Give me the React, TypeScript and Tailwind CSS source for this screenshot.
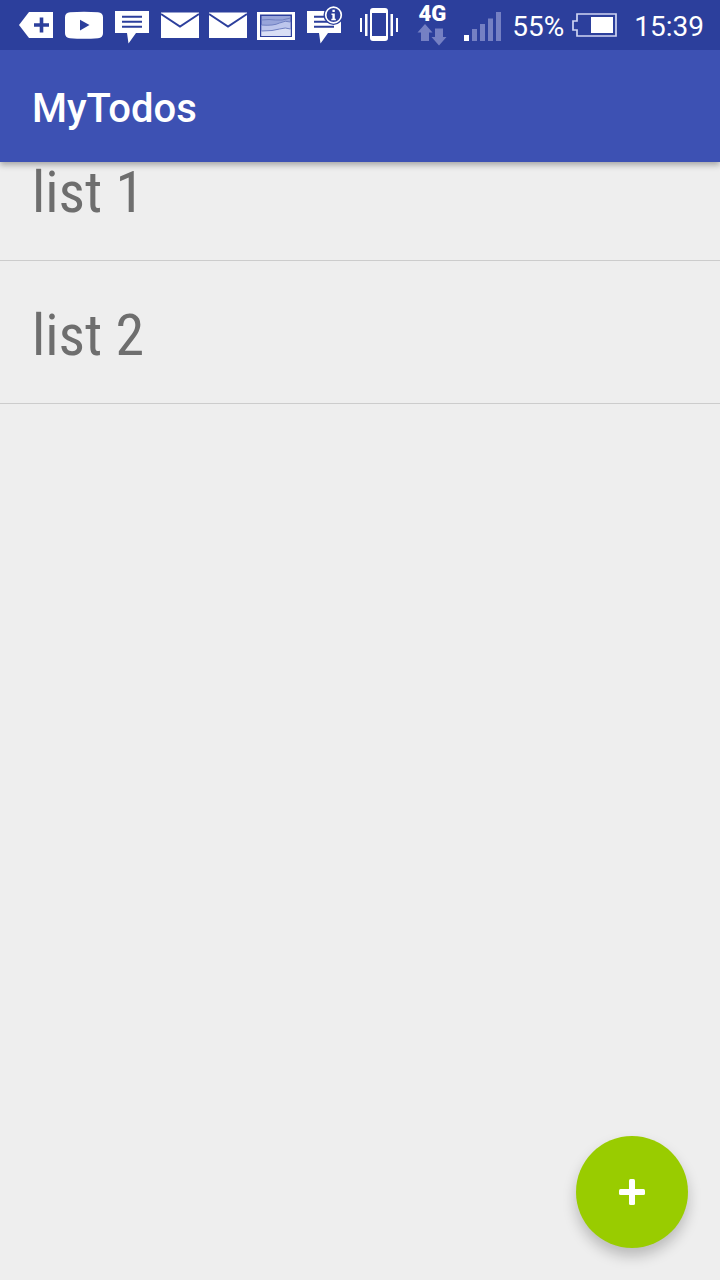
import type { ReactNode } from "react";

const todoLists = ["list 1", "list 2"];

function NotificationIcon({ label, children }: { label: string; children: ReactNode }) {
  return (
    <svg viewBox="0 0 48 50" className="h-[50px] w-12 shrink-0" fill="#fff" role="img" aria-label={label}>
      {children}
    </svg>
  );
}

function MailIcon() {
  return (
    <NotificationIcon label="Mail">
      <path d="M5 12.5h38V38H5z" />
      <path d="M5 14l19 12.5L43 14" fill="none" stroke="#2c3f9c" strokeWidth="2" />
    </NotificationIcon>
  );
}

function Notifications() {
  return (
    <div className="flex">
      <NotificationIcon label="Added">
        <path d="M7 25L17 12h24v26H17z" />
        <path d="M29.5 17.5v15M22 25h15" stroke="#2c3f9c" strokeWidth="3.6" />
      </NotificationIcon>
      <NotificationIcon label="Video">
        <path d="M10 12.3q14-1 28 0 5 .3 5 5v16q0 4.7-5 5-14 1-28 0-5-.3-5-5v-16q0-4.7 5-5z" />
        <path d="M20 19.8v10.7l9.5-5.4z" fill="#2c3f9c" />
      </NotificationIcon>
      <NotificationIcon label="Message">
        <path d="M7 11h34v22H28l-7.5 10.5L19 33H7z" />
        <path d="M14 16.8h20M14 21.8h20M14 26.8h20" stroke="#2c3f9c" strokeWidth="2" />
      </NotificationIcon>
      <MailIcon />
      <MailIcon />
      <NotificationIcon label="Picture">
        <path d="M5 12h38v28H5z" />
        <path d="M8 14.5h32V37H8z" fill="#2c3f9c" />
        <path d="M9.5 16h29v20h-29z" fill="#98a5da" />
        <path d="M9.5 25q12 1 18-2t11-1v14h-29z" fill="#bdc6ec" />
        <path d="M9.5 31q12 0 18-2t11 0v7h-29z" fill="#d9dff5" />
        <path
          d="M9.5 20q8-1 14 0t15-2M9.5 25q12 1 18-2t11-1M9.5 31q12 0 18-2t11 0"
          fill="none"
          stroke="#7080c2"
        />
      </NotificationIcon>
      <NotificationIcon label="Message info">
        <path d="M7 11h34v22H28l-7.5 10.5L19 33H7z" />
        <path d="M14 16.8h14M14 21.8h20M14 26.8h20" stroke="#2c3f9c" strokeWidth="2" />
        <circle cx="33.5" cy="15" r="10" fill="#2c3f9c" />
        <circle cx="33.5" cy="15" r="7.8" fill="none" stroke="#fff" strokeWidth="1.7" />
        <path d="M32.4 9.8h2.4V12h-2.4zM31.5 13.5h3.3v5.2h1v1.500h-4.500v-1.500h1.100V15h-.9z" />
      </NotificationIcon>
    </div>
  );
}

function VibrateIcon() {
  return (
    <svg viewBox="1 0 40 50" className="h-[50px] w-10 shrink-0" fill="#fff" role="img" aria-label="Vibrate">
      <path
        fillRule="evenodd"
        d="M14 8h12a3 3 0 013 3v27a3 3 0 01-3 3H14a3 3 0 01-3-3V11a3 3 0 013-3zM13 13v23h14V13z"
      />
      <path d="M1 18h2v14H1zM6 14h2.500v22H6zM31.500 14H34v22h-2.500zM37 18h2v14h-2z" />
    </svg>
  );
}

function MobileNetwork() {
  return (
    <div className="flex w-8 flex-col items-center pt-1">
      <span className="text-[22px] leading-5 font-black">4G</span>
      <svg viewBox="0 0 32 22" className="h-[22px] w-8" fill="#7580c3" aria-hidden="true">
        <path d="M9 0l7.500 8.500H13V17H5V8.500H1.500zM19 4.500h8V13h3.500L23 21.500 15.500 13H19z" />
      </svg>
    </div>
  );
}

function SignalIcon() {
  return (
    <svg viewBox="0 0 38 50" className="h-[50px] w-[38px] shrink-0" fill="#7580c3" role="img" aria-label="Signal">
      <path d="M0 35h5v6H0z" fill="#fff" />
      <path d="M8 29h5v12H8zM16 24h5v17h-5zM24 18.500h5V41h-5zM32 12h5v29h-5z" />
    </svg>
  );
}

function BatteryIcon() {
  return (
    <svg viewBox="1 0 46 50" className="h-[50px] w-[46px] shrink-0" role="img" aria-label="Battery">
      <path d="M6 14h39v22H6v-6H2v-9h4z" fill="none" stroke="#cfd5f2" strokeWidth="1.7" />
      <path d="M20 17h22v16H20z" fill="#fff" />
    </svg>
  );
}

function StatusBar() {
  return (
    <div className="flex h-[50px] justify-between bg-[#2c3f9c] pr-4 pl-3 text-white">
      <Notifications />
      <div className="flex">
        <VibrateIcon />
        <div className="ml-4 flex">
          <MobileNetwork />
        </div>
        <div className="ml-4 flex">
          <SignalIcon />
        </div>
        <span className="ml-2.5 pt-0.5 text-[28px] leading-[50px]">55%</span>
        <div className="ml-2 flex">
          <BatteryIcon />
        </div>
        <time className="ml-4 pt-0.5 text-[28px] leading-[50px]">15:39</time>
      </div>
    </div>
  );
}

export default function App() {
  return (
    <div className="min-h-screen bg-[#eeeeee] font-['Roboto',sans-serif]">
      <header className="relative z-10 shadow-[0_3px_6px_rgba(0,0,0,0.3)]">
        <StatusBar />
        <div className="flex h-28 items-center bg-[#3d51b3] px-8 pt-1.5">
          <h1 className="text-[40px] leading-[48px] font-medium text-white">MyTodos</h1>
        </div>
      </header>

      <main className="-mt-[44px]">
        <ul>
          {todoLists.map((name) => (
            <li
              key={name}
              className="border-b border-[#cccccc] px-8 pt-10 pb-[34px] font-['Roboto_Condensed','Roboto',sans-serif] text-[58px] leading-[68px] text-[#6e6e6e]"
            >
              {name}
            </li>
          ))}
        </ul>
      </main>

      <button
        type="button"
        aria-label="Add list"
        className="fixed right-8 bottom-8 flex size-28 items-center justify-center rounded-full bg-[#99cc00] shadow-[0_8px_14px_rgba(0,0,0,0.22)]"
      >
        <svg viewBox="0 0 28 28" className="size-7" fill="#fff" aria-hidden="true">
          <rect x="11" y="1" width="6" height="26" rx="1.5" />
          <rect x="1" y="11" width="26" height="6" rx="1.5" />
        </svg>
      </button>
    </div>
  );
}
